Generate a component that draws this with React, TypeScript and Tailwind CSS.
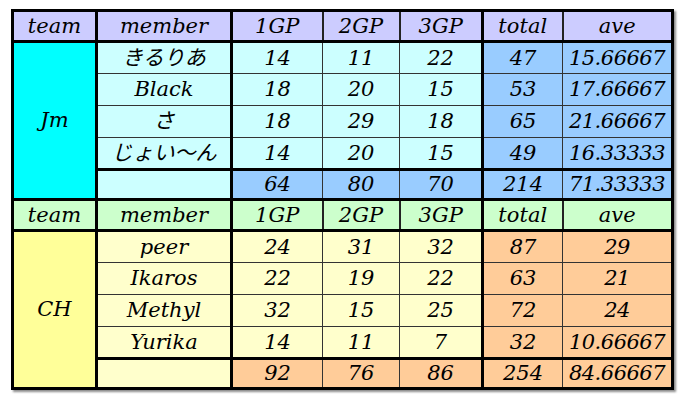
import React from "react";

interface Member {
  name: string;
  gp: number[];
  total: number;
  ave: string;
}

interface Team {
  team: string;
  head: string;
  teamBg: string;
  cellBg: string;
  sumBg: string;
  members: Member[];
  sum: { gp: number[]; total: number; ave: string };
}

const teams: Team[] = [
  {
    team: "Jm",
    head: "bg-[#ccccff]",
    teamBg: "bg-[#00ffff]",
    cellBg: "bg-[#ccffff]",
    sumBg: "bg-[#99ccff]",
    members: [
      { name: "きるりあ", gp: [14, 11, 22], total: 47, ave: "15.66667" },
      { name: "Black", gp: [18, 20, 15], total: 53, ave: "17.66667" },
      { name: "さ", gp: [18, 29, 18], total: 65, ave: "21.66667" },
      { name: "じょい〜ん", gp: [14, 20, 15], total: 49, ave: "16.33333" },
    ],
    sum: { gp: [64, 80, 70], total: 214, ave: "71.33333" },
  },
  {
    team: "CH",
    head: "bg-[#ccffcc]",
    teamBg: "bg-[#ffff99]",
    cellBg: "bg-[#ffffcc]",
    sumBg: "bg-[#ffcc99]",
    members: [
      { name: "peer", gp: [24, 31, 32], total: 87, ave: "29" },
      { name: "Ikaros", gp: [22, 19, 22], total: 63, ave: "21" },
      { name: "Methyl", gp: [32, 15, 25], total: 72, ave: "24" },
      { name: "Yurika", gp: [14, 11, 7], total: 32, ave: "10.66667" },
    ],
    sum: { gp: [92, 76, 86], total: 254, ave: "84.66667" },
  },
];

const headers = ["team", "member", "1GP", "2GP", "3GP", "total", "ave"];

// base cell: thin dark lines, thick ones added per position
const cell = "border border-[#333] text-center p-0 leading-none";
const thickL = "border-l-[3px] border-l-black";
const thickT = "border-t-[3px] border-t-black";
const headL = "border-l-2 border-l-[#222]";

function HeaderRow({ bg }: { bg: string }) {
  return (
    <tr className="h-[31px]">
      {headers.map((h, i) => (
        <td
          key={h}
          className={`${cell} ${bg} ${thickT} ${i === 3 || i === 4 || i === 6 ? headL : thickL}`}
        >
          {h}
        </td>
      ))}
    </tr>
  );
}

function TeamBlock({ t }: { t: Team }) {
  return (
    <>
      <HeaderRow bg={t.head} />
      {t.members.map((m, idx) => (
        <tr key={m.name} className="h-[32px]">
          {idx === 0 && (
            <td rowSpan={5} className={`${cell} ${t.teamBg} ${thickL} ${thickT}`}>
              {t.team}
            </td>
          )}
          <td className={`${cell} ${t.cellBg} ${thickL} ${idx === 0 ? thickT : ""}`}>
            {m.name}
          </td>
          {m.gp.map((g, gi) => (
            <td
              key={gi}
              className={`${cell} ${t.cellBg} ${gi === 0 ? thickL : ""} ${idx === 0 ? thickT : ""}`}
            >
              {g}
            </td>
          ))}
          <td className={`${cell} ${t.sumBg} ${thickL} ${idx === 0 ? thickT : ""}`}>
            {m.total}
          </td>
          <td className={`${cell} ${t.sumBg} tracking-[-0.5px] ${idx === 0 ? thickT : ""}`}>
            {m.ave}
          </td>
        </tr>
      ))}
      <tr className="h-[30px]">
        <td className={`${cell} ${t.cellBg} ${thickL} ${thickT}`}></td>
        {t.sum.gp.map((g, gi) => (
          <td key={gi} className={`${cell} ${t.sumBg} ${thickT} ${gi === 0 ? thickL : ""}`}>
            {g}
          </td>
        ))}
        <td className={`${cell} ${t.sumBg} ${thickT} ${thickL}`}>{t.sum.total}</td>
        <td className={`${cell} ${t.sumBg} ${thickT} tracking-[-0.5px]`}>{t.sum.ave}</td>
      </tr>
    </>
  );
}

export default function App() {
  return (
    <div className="w-[692px] h-[403px] bg-white pt-[9px] pl-[11px]">
      <table className="table-fixed border-collapse border-[3px] border-black w-[660px] shadow-[2px_2px_2px_rgba(0,0,0,0.45)] font-['DejaVu_Serif','Noto_Sans_CJK_JP',serif] italic text-[21px] text-black">
        <colgroup>
          <col className="w-[84px]" />
          <col className="w-[135px]" />
          <col className="w-[91px]" />
          <col className="w-[77px]" />
          <col className="w-[83px]" />
          <col className="w-[80px]" />
          <col className="w-[110px]" />
        </colgroup>
        <tbody>
          {teams.map((t) => (
            <TeamBlock key={t.team} t={t} />
          ))}
        </tbody>
      </table>
    </div>
  );
}
